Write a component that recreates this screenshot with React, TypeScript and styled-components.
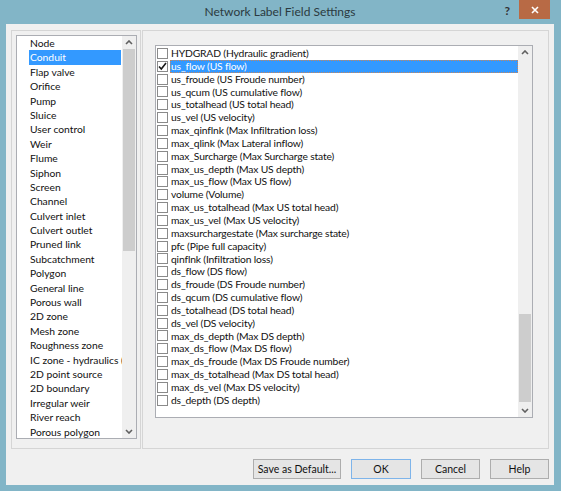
import React from "react";
import styled, { createGlobalStyle } from "styled-components";

const GlobalStyle = createGlobalStyle`
  html, body {
    margin: 0;
    padding: 0;
    background: #82b5c7;
  }
  * {
    box-sizing: border-box;
  }
`;

const categories = [
  "Node",
  "Conduit",
  "Flap valve",
  "Orifice",
  "Pump",
  "Sluice",
  "User control",
  "Weir",
  "Flume",
  "Siphon",
  "Screen",
  "Channel",
  "Culvert inlet",
  "Culvert outlet",
  "Pruned link",
  "Subcatchment",
  "Polygon",
  "General line",
  "Porous wall",
  "2D zone",
  "Mesh zone",
  "Roughness zone",
  "IC zone - hydraulics (2D)",
  "2D point source",
  "2D boundary",
  "Irregular weir",
  "River reach",
  "Porous polygon",
];

const fields = [
  "HYDGRAD (Hydraulic gradient)",
  "us_flow (US flow)",
  "us_froude (US Froude number)",
  "us_qcum (US cumulative flow)",
  "us_totalhead (US total head)",
  "us_vel (US velocity)",
  "max_qinflnk (Max Infiltration loss)",
  "max_qlink (Max Lateral inflow)",
  "max_Surcharge (Max Surcharge state)",
  "max_us_depth (Max US depth)",
  "max_us_flow (Max US flow)",
  "volume (Volume)",
  "max_us_totalhead (Max US total head)",
  "max_us_vel (Max US velocity)",
  "maxsurchargestate (Max surcharge state)",
  "pfc (Pipe full capacity)",
  "qinflnk (Infiltration loss)",
  "ds_flow (DS flow)",
  "ds_froude (DS Froude number)",
  "ds_qcum (DS cumulative flow)",
  "ds_totalhead (DS total head)",
  "ds_vel (DS velocity)",
  "max_ds_depth (Max DS depth)",
  "max_ds_flow (Max DS flow)",
  "max_ds_froude (Max DS Froude number)",
  "max_ds_totalhead (Max DS total head)",
  "max_ds_vel (Max DS velocity)",
  "ds_depth (DS depth)",
];

const font = `"Segoe UI", Lato, "Noto Sans", sans-serif`;

const Window = styled.div`
  width: 561px;
  height: 491px;
  background: #82b5c7;
  display: flex;
  flex-direction: column;
  padding: 0 7px 6px 6px;
  font-family: ${font};
`;

const TitleBar = styled.div`
  height: 24px;
  display: grid;
  grid-template-columns: 1fr auto 1fr;
  align-items: start;
`;

const Title = styled.div`
  grid-column: 2;
  padding-top: 4px;
  font-size: 12px;
  color: #2b3a40;
`;

const Caption = styled.div`
  grid-column: 3;
  justify-self: end;
  display: flex;
  align-items: flex-start;
  margin-right: 4px;
`;

const HelpGlyph = styled.span`
  font-size: 12px;
  font-weight: bold;
  color: #333;
  padding-top: 3px;
  margin-right: 9px;
`;

const CloseButton = styled.div`
  width: 31px;
  height: 19px;
  background: #b86a45;
  display: flex;
  align-items: center;
  justify-content: center;
`;

const Client = styled.div`
  flex: 1;
  background: #f0f0f0;
  display: flex;
  flex-direction: column;
  padding: 6px 5px 5px 5px;
`;

const Panels = styled.div`
  display: flex;
  gap: 1px;
  height: 419px;
`;

const Panel = styled.div<{ $width?: number }>`
  border: 1px solid #d5d5d5;
  ${(p) => (p.$width ? `width: ${p.$width}px;` : "flex: 1;")}
`;

const ListBox = styled.div`
  margin: 4px 0 0 4px;
  width: 121px;
  height: 404px;
  border: 1px solid #abadb3;
  background: #fff;
  display: flex;
`;

const CheckListBox = styled.div`
  margin: 14px 0 0 12px;
  width: 378px;
  height: 373px;
  border: 1px solid #abadb3;
  background: #fff;
  display: flex;
`;

const Items = styled.div<{ $pad: number }>`
  flex: 1;
  min-width: 0;
  padding-top: ${(p) => p.$pad}px;
  overflow: hidden;
`;

const CategoryRow = styled.div<{ $selected?: boolean }>`
  height: 14.4px;
  line-height: 14.4px;
  margin: 0 1px 0 12px;
  padding-left: 1px;
  font-size: 10.3px;
  white-space: nowrap;
  color: ${(p) => (p.$selected ? "#fff" : "#111")};
  background: ${(p) => (p.$selected ? "#3399ff" : "transparent")};
`;

const FieldRow = styled.div`
  height: 12.85px;
  display: flex;
  align-items: center;
  padding-left: 1px;
`;

const CheckBox = styled.div`
  width: 11px;
  height: 11px;
  border: 1px solid #8a8a8a;
  background: #fff;
  margin-right: 2px;
  display: flex;
  align-items: center;
  justify-content: center;
  flex: none;
`;

const FieldLabel = styled.div<{ $selected?: boolean }>`
  flex: 1;
  height: 12.85px;
  line-height: 12.3px;
  padding-left: 1px;
  font-size: 10.3px;
  letter-spacing: -0.15px;
  white-space: nowrap;
  color: ${(p) => (p.$selected ? "#fff" : "#111")};
  background: ${(p) => (p.$selected ? "#3399ff" : "transparent")};
  outline: ${(p) => (p.$selected ? "1px dotted #c9865a" : "none")};
  outline-offset: -1px;
`;

const ScrollBar = styled.div`
  width: 14px;
  flex: none;
  background: #efefef;
  display: flex;
  flex-direction: column;
`;

const Arrow = styled.div`
  height: 13px;
  display: flex;
  align-items: center;
  justify-content: center;
  flex: none;
`;

const Track = styled.div`
  flex: 1;
  display: flex;
  flex-direction: column;
`;

const Thumb = styled.div<{ $top: number; $height: number }>`
  margin: ${(p) => p.$top}px 1px 0 1px;
  height: ${(p) => p.$height}px;
  background: #cdcdcd;
`;

const ButtonRow = styled.div`
  display: flex;
  justify-content: flex-end;
  gap: 10px;
  margin-top: 10px;
`;

const Button = styled.div<{ $width: number; $default?: boolean }>`
  width: ${(p) => p.$width}px;
  height: 20px;
  border: 1px solid ${(p) => (p.$default ? "#7eb4ea" : "#adadad")};
  background: #e5e5e5;
  font-size: 10.5px;
  color: #111;
  display: flex;
  align-items: center;
  justify-content: center;
`;

const Chevron = ({ up }: { up?: boolean }) => (
  <svg width="8" height="5" viewBox="0 0 8 5">
    <polyline
      points={up ? "1,4 4,1 7,4" : "1,1 4,4 7,1"}
      fill="none"
      stroke="#606060"
      strokeWidth="1.6"
    />
  </svg>
);

const Tick = () => (
  <svg width="9" height="9" viewBox="0 0 9 9">
    <polyline points="1,4.5 3.3,7 8,1" fill="none" stroke="#1a1a1a" strokeWidth="1.6" />
  </svg>
);

const Scroller = ({ top, height }: { top: number; height: number }) => (
  <ScrollBar>
    <Arrow>
      <Chevron up />
    </Arrow>
    <Track>
      <Thumb $top={top} $height={height} />
    </Track>
    <Arrow>
      <Chevron />
    </Arrow>
  </ScrollBar>
);

const App = () => (
  <>
    <GlobalStyle />
    <Window>
      <TitleBar>
        <Title>Network Label Field Settings</Title>
        <Caption>
          <HelpGlyph>?</HelpGlyph>
          <CloseButton>
            <svg width="8" height="8" viewBox="0 0 8 8">
              <path d="M1 1L7 7M7 1L1 7" stroke="#fff" strokeWidth="1.6" />
            </svg>
          </CloseButton>
        </Caption>
      </TitleBar>
      <Client>
        <Panels>
          <Panel $width={130}>
            <ListBox>
              <Items $pad={0}>
                {categories.map((c, i) => (
                  <CategoryRow key={c} $selected={i === 1}>
                    {c}
                  </CategoryRow>
                ))}
              </Items>
              <Scroller top={0} height={202} />
            </ListBox>
          </Panel>
          <Panel>
            <CheckListBox>
              <Items $pad={1}>
                {fields.map((f, i) => (
                  <FieldRow key={f}>
                    <CheckBox>{i === 1 && <Tick />}</CheckBox>
                    <FieldLabel $selected={i === 1}>{f}</FieldLabel>
                  </FieldRow>
                ))}
              </Items>
              <Scroller top={255} height={88} />
            </CheckListBox>
          </Panel>
        </Panels>
        <ButtonRow>
          <Button $width={88}>Save as Default...</Button>
          <Button $width={60} $default>
            OK
          </Button>
          <Button $width={59}>Cancel</Button>
          <Button $width={59}>Help</Button>
        </ButtonRow>
      </Client>
    </Window>
  </>
);

export default App;
